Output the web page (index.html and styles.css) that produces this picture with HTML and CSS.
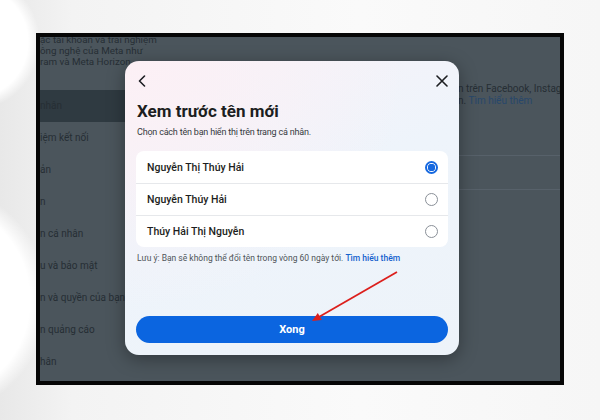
FILE: index.html
```html
<!DOCTYPE html>
<html lang="vi">
<head>
<meta charset="utf-8">
<title>Xem trước tên mới</title>
<link rel="stylesheet" href="styles.css">
</head>
<body>
  <div class="shot">
    <div class="page">
      <aside class="side">
        <div class="intro">
          <p>ặc tài khoản và trải nghiệm</p>
          <p>ông nghệ của Meta như</p>
          <p>ram và Meta Horizon.</p>
        </div>
        <ul class="nav">
          <li class="active">nhân</li>
          <li>iệm kết nối</li>
          <li>ản</li>
          <li>n</li>
          <li>n cá nhân</li>
          <li>u và bảo mật</li>
          <li>n và quyền của bạn</li>
          <li>n quảng cáo</li>
          <li>hân</li>
        </ul>
      </aside>
      <main class="main">
        <p class="lead">n trên Facebook, Instag</p>
        <p class="lead">n. <a href="#">Tìm hiểu thêm</a></p>
        <div class="rule first"></div>
        <div class="rule"></div>
      </main>
    </div>

    <div class="dialog">
      <div class="dialog-head">
        <svg class="back" width="10" height="12" viewBox="0 0 10 12"><path d="M7.5 1 L2.5 6 L7.5 11" /></svg>
        <svg class="close" width="12" height="12" viewBox="0 0 12 12"><path d="M1 1 L11 11 M11 1 L1 11" /></svg>
      </div>
      <h1 class="title">Xem trước tên mới</h1>
      <p class="sub">Chọn cách tên bạn hiển thị trên trang cá nhân.</p>

      <div class="options">
        <label class="option">
          <span>Nguyễn Thị Thúy Hải</span>
          <span class="radio checked"></span>
        </label>
        <label class="option">
          <span>Nguyễn Thúy Hải</span>
          <span class="radio"></span>
        </label>
        <label class="option">
          <span>Thúy Hải Thị Nguyễn</span>
          <span class="radio"></span>
        </label>
      </div>

      <p class="note">Lưu ý: Bạn sẽ không thể đổi tên trong vòng 60 ngày tới. <a href="#">Tìm hiểu thêm</a></p>

      <button class="done">Xong</button>
    </div>

    <svg class="pointer" width="520" height="344" viewBox="0 0 520 344">
      <line x1="357" y1="235" x2="278" y2="280.5" />
      <polygon points="272,284 281.8,283 277.8,276" />
    </svg>
  </div>
</body>
</html>
```

FILE: styles.css
```css
* {
  box-sizing: border-box;
}
html, body {
  margin: 0;
}
body {
  width: 600px;
  height: 420px;
  padding: 33px 36px;
  font-family: Roboto, "Noto Sans", sans-serif;
  background:
    radial-gradient(circle at -28px 42px, #ffffff 0 56px, rgba(255,255,255,0) 68px),
    radial-gradient(circle at -70px 300px, #ffffff 0 100px, rgba(255,255,255,0) 118px),
    linear-gradient(90deg, #e8e8e8 0, #f3f3f3 12%, #fafafa 60%, #f6f6f6 100%);
}

/* framed page */
.shot {
  position: relative;
  width: 528px;
  height: 352px;
  border: 4px solid #060606;
  overflow: hidden;
  background: #4b555c;
}
.page {
  display: flex;
  height: 100%;
  color: #262e34;
}
.side {
  width: 85px;
  flex: none;
}
.intro {
  margin-top: -3px;
  font-size: 9.8px;
  line-height: 11px;
}
.intro p {
  margin: 0;
  white-space: nowrap;
}
.nav {
  list-style: none;
  margin: 23px 0 0;
  padding: 0;
}
.nav li {
  height: 32px;
  line-height: 32px;
  font-size: 10px;
  white-space: nowrap;
  overflow: hidden;
}
.nav li.active {
  background: #2f3a41;
}
.main {
  flex: 1;
  overflow: hidden;
  padding-top: 46px;
}
.lead {
  margin: 0;
  padding-left: 333px;
  font-size: 10px;
  line-height: 12px;
  white-space: nowrap;
}
.lead a {
  color: #27476b;
  text-decoration: none;
}
.rule {
  margin-left: 334px;
  height: 1px;
  background: #57616a;
  margin-top: 33px;
}
.rule.first {
  margin-top: 48px;
}

/* name preview dialog */
.dialog {
  position: absolute;
  left: 85px;
  top: 24px;
  width: 334px;
  height: 294px;
  border-radius: 14px;
  padding: 12px 11px 12px 11px;
  display: flex;
  flex-direction: column;
  background:
    radial-gradient(ellipse at 0 0, #fcf0f5 0, rgba(252,240,245,0) 60%),
    linear-gradient(160deg, #f7f2f8 0, #eef4fb 45%, #edf3f9 100%);
  box-shadow: 0 4px 18px rgba(0,0,0,.35);
  color: #1c1e21;
}
.dialog-head {
  display: flex;
  justify-content: space-between;
  align-items: center;
  height: 16px;
  padding: 0 0 0 1px;
}
.dialog-head svg {
  fill: none;
  stroke: #1c1e21;
  stroke-width: 1.6;
  stroke-linecap: round;
  stroke-linejoin: round;
}
.title {
  margin: 11px 0 0 1px;
  font-size: 17px;
  line-height: 22px;
  font-weight: 700;
}
.sub {
  margin: 3px 0 0 1px;
  font-size: 9px;
  letter-spacing: -0.2px;
  line-height: 14px;
  color: #35393e;
}
.options {
  margin-top: 12px;
  background: #fff;
  border-radius: 8px;
}
.option {
  display: flex;
  align-items: center;
  justify-content: space-between;
  height: 32px;
  padding: 0 10px 0 11px;
  font-size: 10.5px;
  font-weight: 500;
}
.option + .option {
  border-top: 1px solid #e6e8eb;
}
.radio {
  width: 13px;
  height: 13px;
  border-radius: 50%;
  border: 1.5px solid #8a9098;
}
.radio.checked {
  border: 2px solid #1668df;
  background: radial-gradient(circle, #1668df 0 3.5px, #fff 4px);
}
.note {
  margin: 5px 0 0 1px;
  font-size: 8.5px;
  line-height: 12px;
  color: #4f5459;
}
.note a {
  color: #1461cd;
  font-weight: 500;
  text-decoration: none;
}
.done {
  margin-top: auto;
  height: 27px;
  border: 0;
  border-radius: 14px;
  background: #0b65e0;
  color: #fff;
  font: 700 11px Roboto, "Noto Sans", sans-serif;
}

/* red callout arrow */
.pointer {
  position: absolute;
  left: 0;
  top: 0;
  pointer-events: none;
}
.pointer line {
  stroke: #dc1f1c;
  stroke-width: 1.8;
}
.pointer polygon {
  fill: #dc1f1c;
}
```
